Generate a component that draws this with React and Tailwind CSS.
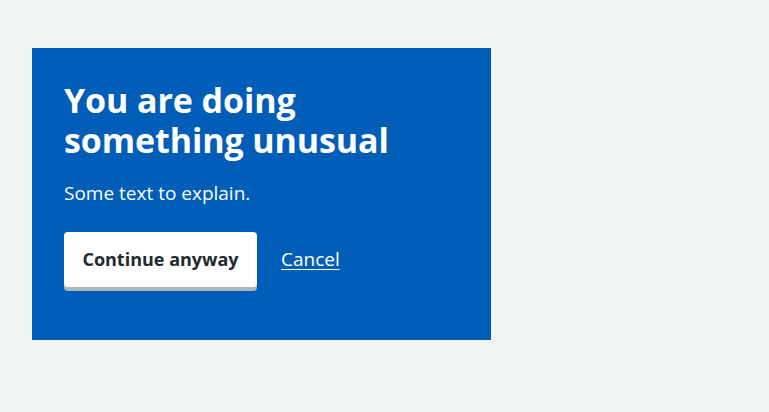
export default function App() {
  return (
    <div className="min-h-[412px] w-full bg-[#f0f4f5] pt-[48px] pl-[32px]">
      <div className="w-[459px] h-[292px] bg-[#005eb8] p-[32px] text-white font-['Open_Sans',sans-serif]">
        <h1 className="text-[34px] leading-[40px] font-bold tracking-[-0.1px] mb-[19px]">
          You are doing<br />something unusual
        </h1>
        <p className="text-[19px] leading-[28px] mb-[25px]">Some text to explain.</p>
        <div className="flex items-center gap-[24px]">
          <button className="h-[55px] w-[193px] rounded-[4px] bg-white text-[#212b32] text-[18px] font-bold shadow-[0_4px_0_#aeb7bd]">
            Continue anyway
          </button>
          <a href="#" className="text-[19px] underline text-white underline-offset-[3px]">Cancel</a>
        </div>
      </div>
    </div>
  );
}
